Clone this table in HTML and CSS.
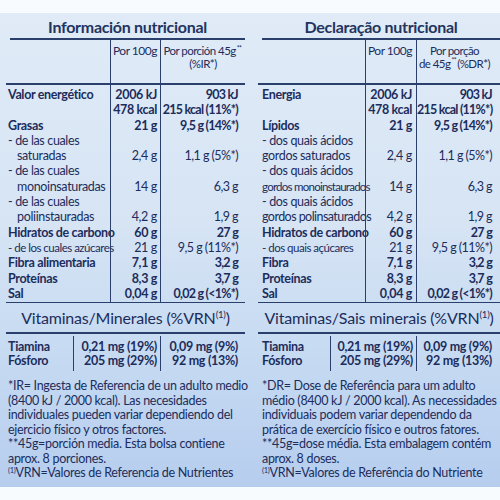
FILE: index.html
```html
<!DOCTYPE html>
<html lang="es">
<head>
<meta charset="utf-8">
<title>Información nutricional</title>
<link rel="stylesheet" href="styles.css">
</head>
<body>
<div class="label">
  <section class="panel left">
    <h2 class="title">Información nutricional</h2>
    <div class="nt">
      <div class="hd"></div><div class="hd">Por 100g</div><div class="hd hc">Por porción 45g<sup>**</sup><br>(%IR*)</div>
      <div class="b">Valor energético</div><div class="b">2006 kJ</div><div class="b">903 kJ</div>
      <div></div><div class="b">478 kcal</div><div class="b">215 kcal (11%*)</div>
      <div class="b">Grasas</div><div class="b">21 g</div><div class="b">9,5 g (14%*)</div>
      <div>- de las cuales</div><div></div><div></div>
      <div class="ind">saturadas</div><div>2,4 g</div><div>1,1 g (5%*)</div>
      <div>- de las cuales</div><div></div><div></div>
      <div class="ind">monoinsaturadas</div><div>14 g</div><div>6,3 g</div>
      <div>- de las cuales</div><div></div><div></div>
      <div class="ind">poliinstauradas</div><div>4,2 g</div><div>1,9 g</div>
      <div class="b">Hidratos de carbono</div><div class="b">60 g</div><div class="b">27 g</div>
      <div class="sm">- de los cuales azúcares</div><div>21 g</div><div>9,5 g (11%*)</div>
      <div class="b">Fibra alimentaria</div><div class="b">7,1 g</div><div class="b">3,2 g</div>
      <div class="b">Proteínas</div><div class="b">8,3 g</div><div class="b">3,7 g</div>
      <div class="b">Sal</div><div class="b">0,04 g</div><div class="b">0,02 g (&lt;1%*)</div>
    </div>
    <h3 class="vtitle">Vitaminas/Minerales (%VRN<sup>(1)</sup>)</h3>
    <div class="vt">
      <div>Tiamina<br>Fósforo</div>
      <div>0,21 mg (19%)<br>205 mg (29%)</div>
      <div>0,09 mg (9%)<br>92 mg (13%)</div>
    </div>
    <p class="notes">*IR= Ingesta de Referencia de un adulto medio<br>(8400 kJ / 2000 kcal). Las necesidades<br>individuales pueden variar dependiendo del<br>ejercicio físico y otros factores.<br>**45g=porción media. Esta bolsa contiene<br>aprox. 8 porciones.<br><sup>(1)</sup>VRN=Valores de Referencia de Nutrientes</p>
  </section>
  <section class="panel right" lang="pt">
    <h2 class="title">Declaração nutricional</h2>
    <div class="nt">
      <div class="hd"></div><div class="hd">Por 100g</div><div class="hd hc">Por porção<br>de 45g<sup>**</sup>(%DR*)</div>
      <div class="b">Energia</div><div class="b">2006 kJ</div><div class="b">903 kJ</div>
      <div></div><div class="b">478 kcal</div><div class="b">215 kcal (11%*)</div>
      <div class="b">Lípidos</div><div class="b">21 g</div><div class="b">9,5 g (14%*)</div>
      <div>- dos quais ácidos</div><div></div><div></div>
      <div>gordos saturados</div><div>2,4 g</div><div>1,1 g (5%*)</div>
      <div>- dos quais ácidos</div><div></div><div></div>
      <div class="sq">gordos monoinstaurados</div><div>14 g</div><div>6,3 g</div>
      <div>- dos quais ácidos</div><div></div><div></div>
      <div class="sp">gordos polinsaturados</div><div>4,2 g</div><div>1,9 g</div>
      <div class="b">Hidratos de carbono</div><div class="b">60 g</div><div class="b">27 g</div>
      <div class="sm">- dos quais açúcares</div><div>21 g</div><div>9,5 g (11%*)</div>
      <div class="b">Fibra</div><div class="b">7,1 g</div><div class="b">3,2 g</div>
      <div class="b">Proteínas</div><div class="b">8,3 g</div><div class="b">3,7 g</div>
      <div class="b">Sal</div><div class="b">0,04 g</div><div class="b">0,02 g (&lt;1%*)</div>
    </div>
    <h3 class="vtitle">Vitaminas/Sais minerais (%VRN<sup>(1)</sup>)</h3>
    <div class="vt">
      <div>Tiamina<br>Fósforo</div>
      <div>0,21 mg (19%)<br>205 mg (29%)</div>
      <div>0,09 mg (9%)<br>92 mg (13%)</div>
    </div>
    <p class="notes">*DR= Dose de Referência para um adulto<br>médio (8400 kJ / 2000 kcal). As necessidades<br>individuais podem variar dependendo da<br>prática de exercício físico e outros fatores.<br>**45g=dose média. Esta embalagem contém<br>aprox. 8 doses.<br><sup>(1)</sup>VRN=Valores de Referência do Nutriente</p>
  </section>
</div>
</body>
</html>
```

FILE: styles.css
```css
html, body {
  margin: 0;
  padding: 0;
  background: #f8fbfd;
}
body {
  width: 500px;
  height: 500px;
  overflow: hidden;
  font-family: Lato, "Open Sans", sans-serif;
  color: #1c2d5c;
}
.label {
  margin-top: 13px;
  height: 474px;
  display: flex;
  gap: 13px;
  padding-left: 6px;
  background: linear-gradient(180deg, #e0ebf7 0%, #d6e4f4 45%, #c7dbf2 70%, #b6cdee 100%);
  overflow: hidden;
}
.panel {
  flex: none;
  display: flex;
  flex-direction: column;
}
.left { width: 239px; }
.right { width: 242px; }

.title {
  margin: 0 0 0 4px;
  height: 25px;
  line-height: 27px;
  font-size: 16px;
  font-weight: 700;
  text-align: center;
  letter-spacing: -0.3px;
  color: #23345f;
  border-bottom: 2px solid #2a3f6c;
}

.nt {
  display: grid;
  grid-template-columns: 104px 50px minmax(0, 1fr);
  font-size: 12.5px;
  letter-spacing: -0.35px;
}
.right .nt { grid-template-columns: 107px 51px minmax(0, 1fr); }
.nt > div {
  line-height: 15.3px;
  white-space: nowrap;
}
.nt > div:nth-child(3n+1) { padding-left: 2px; }
.right .nt > div:nth-child(3n+1) { padding-left: 4px; }
.nt > div:nth-child(3n+2),
.nt > div:nth-child(3n+3) {
  border-left: 1.5px solid #2a3f6c;
  text-align: right;
  padding-right: 3px;
}
.right .nt > div:nth-child(3n+2) { padding-right: 4px; }
.nt > div:nth-child(3n+3) { padding-right: 7px; letter-spacing: -0.55px; }
.right .nt > div:nth-child(3n+3) { padding-right: 8px; }
.nt > div.b:nth-child(3n+3) { letter-spacing: -0.75px; }
.nt > div:nth-child(4),
.nt > div:nth-child(5),
.nt > div:nth-child(6) { padding-top: 2px; }
.nt > div:nth-last-child(-n+3) { padding-bottom: 1px; }

.nt > .hd {
  height: 45px;
  box-sizing: border-box;
  line-height: 12.5px;
  padding-top: 5px;
  font-size: 12px;
  letter-spacing: -0.5px;
  border-bottom: 2px solid #2a3f6c;
}
.nt > .hc.hc {
  text-align: center;
  padding-left: 0;
  padding-right: 0;
  font-size: 11.5px;
  letter-spacing: -0.55px;
}
.nt > .hc sup { margin-left: 1px; margin-right: 1px; }
.b { font-weight: 700; }
.ind { text-indent: 9px; }
.sm { font-size: 11.5px; letter-spacing: -0.5px; }
.sp { letter-spacing: -0.55px; }
.sq { font-size: 11.5px; letter-spacing: -0.75px; }
sup { font-size: 0.6em; line-height: 0; vertical-align: 0.6em; }

.vtitle {
  margin: 0;
  border-top: 1px solid #2a3f6c;
  border-bottom: 2px solid #2a3f6c;
  height: 29px;
  line-height: 30px;
  font-size: 16px;
  font-weight: 400;
  text-align: center;
  letter-spacing: -0.2px;
}
.vt {
  display: grid;
  grid-template-columns: 67px 87px minmax(0, 1fr);
  margin-top: 2px;
  font-size: 12.5px;
  font-weight: 700;
  line-height: 14px;
  letter-spacing: -0.3px;
}
.right .vt { grid-template-columns: 72px 86px minmax(0, 1fr); }
.vt > div { padding: 4px 3px 3px; white-space: nowrap; }
.vt > div:first-child { padding-left: 2px; }
.right .vt > div:first-child { padding-left: 4px; }
.vt > div + div {
  border-left: 1.5px solid #2a3f6c;
  text-align: right;
}
.vt > div:last-child { padding-right: 7px; }
.right .vt > div:last-child { padding-right: 8px; }
.notes {
  margin: 8px 0 0 2px;
  font-size: 12.5px;
  line-height: 14.5px;
  letter-spacing: -0.3px;
  white-space: nowrap;
}
.right .notes { margin-left: 4px; }
```
